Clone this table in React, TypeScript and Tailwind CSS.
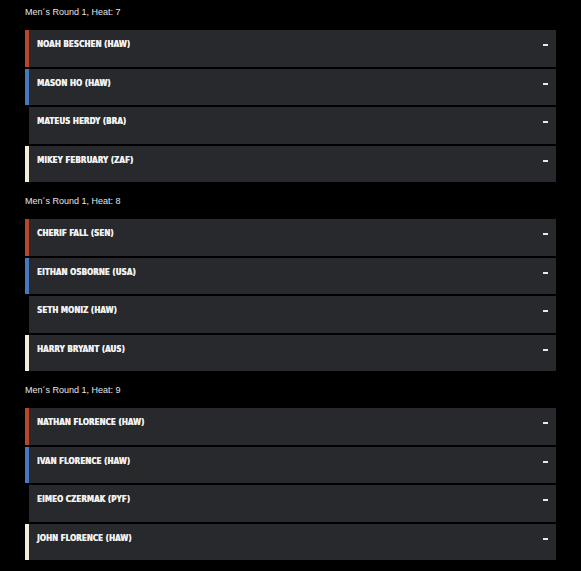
import React from 'react';

interface Heat {
  title: string;
  surfers: string[];
}

const heats: Heat[] = [
  {
    title: 'Men´s Round 1, Heat: 7',
    surfers: ['NOAH BESCHEN (HAW)', 'MASON HO (HAW)', 'MATEUS HERDY (BRA)', 'MIKEY FEBRUARY (ZAF)'],
  },
  {
    title: 'Men´s Round 1, Heat: 8',
    surfers: ['CHERIF FALL (SEN)', 'EITHAN OSBORNE (USA)', 'SETH MONIZ (HAW)', 'HARRY BRYANT (AUS)'],
  },
  {
    title: 'Men´s Round 1, Heat: 9',
    surfers: ['NATHAN FLORENCE (HAW)', 'IVAN FLORENCE (HAW)', 'EIMEO CZERMAK (PYF)', 'JOHN FLORENCE (HAW)'],
  },
];

// jersey colours in heat order: red, blue, black, white
const jerseys = ['bg-[#b7462b]', 'bg-[#4a78bf]', 'bg-black', 'bg-[#f4eedd]'];

export default function App() {
  return (
    <div className="min-h-[571px] bg-black px-[25px] pt-[5.5px] font-['Liberation_Sans',Arial,sans-serif]">
      {heats.map((heat) => (
        <div key={heat.title} className="mb-[12.5px]">
          <div className="h-[12px] text-[9px] leading-[12px] text-[#e6e6e6]">{heat.title}</div>
          <div className="mt-[12.5px] flex flex-col gap-[2px]">
            {heat.surfers.map((name, i) => (
              <div key={name} className="flex h-[36.5px]">
                <div className={`w-[4px] shrink-0 ${jerseys[i]}`}></div>
                <div className="flex flex-1 items-center justify-between bg-[#27292c] pb-[6px] pl-[8px] pr-[8px]">
                  <span className="font-['DejaVu_Sans_Condensed','DejaVu_Sans',sans-serif] text-[8px] font-bold tracking-[0.05px] text-[#f0f0f0] [text-shadow:0.3px_0_0_#f0f0f0]">
                    {name}
                  </span>
                  <span className="mr-[0.5px] block h-[2px] w-[5px] bg-[#e8e8e8]"></span>
                </div>
              </div>
            ))}
          </div>
        </div>
      ))}
    </div>
  );
}
